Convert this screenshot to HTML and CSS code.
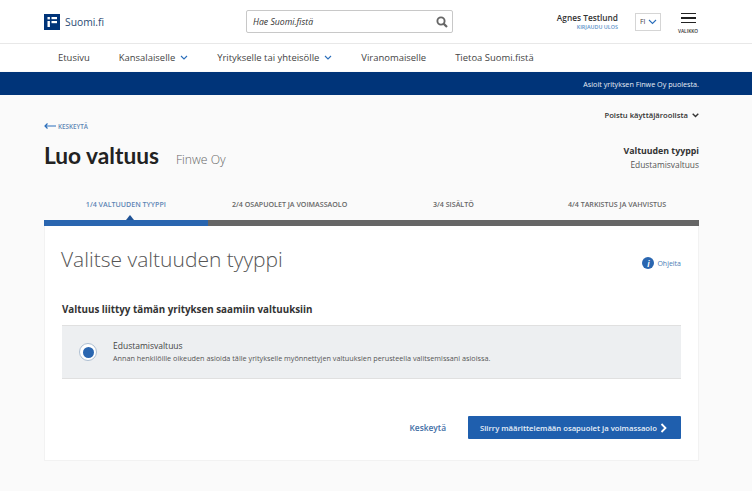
FILE: index.html
```html
<!DOCTYPE html>
<html lang="fi">
<head>
<meta charset="utf-8">
<title>Luo valtuus</title>
<link rel="stylesheet" href="styles.css">
</head>
<body>
<header class="top">
  <a class="logo">
    <svg class="logo-mark" width="16" height="16" viewBox="0 0 16 16"><rect width="16" height="16" fill="#003479"/><rect x="3.5" y="3" width="2.4" height="2.4" fill="#fff"/><rect x="3.5" y="7" width="2.4" height="6" fill="#fff"/><rect x="7.5" y="3" width="5.5" height="2.2" fill="#fff"/><rect x="7.5" y="7" width="5.5" height="2.2" fill="#fff"/></svg>
    <span class="logo-text">Suomi.fi</span>
  </a>
  <div class="search">
    <span class="search-text">Hae Suomi.fistä</span>
    <svg width="12" height="12" viewBox="0 0 12 12"><circle cx="5" cy="5" r="3.6" fill="none" stroke="#666" stroke-width="1.9"/><path d="M7.6 7.6 11 11" stroke="#666" stroke-width="2.2"/></svg>
  </div>
  <div class="user">
    <span class="user-name">Agnes Testlund</span>
    <span class="logout">KIRJAUDU ULOS</span>
  </div>
  <div class="lang">FI
    <svg width="9" height="6" viewBox="0 0 9 6"><path d="M1 1l3.5 3.5L8 1" fill="none" stroke="#2a6ebb" stroke-width="1.1"/></svg>
  </div>
  <div class="menu">
    <span class="burger"><i></i><i></i><i></i></span>
    <span class="menu-label">VALIKKO</span>
  </div>
</header>
<nav class="nav">
  <a class="nav-item">Etusivu</a>
  <a class="nav-item">Kansalaiselle <svg width="8" height="5" viewBox="0 0 8 5"><path d="M1 1l3 3 3-3" fill="none" stroke="#2a6ebb" stroke-width="1.1"/></svg></a>
  <a class="nav-item">Yritykselle tai yhteisölle <svg width="8" height="5" viewBox="0 0 8 5"><path d="M1 1l3 3 3-3" fill="none" stroke="#2a6ebb" stroke-width="1.1"/></svg></a>
  <a class="nav-item">Viranomaiselle</a>
  <a class="nav-item">Tietoa Suomi.fistä</a>
</nav>
<div class="band">Asioit yrityksen Finwe Oy puolesta.</div>
<main class="page">
  <div class="role">Poistu käyttäjäroolista
    <svg width="7" height="5" viewBox="0 0 7 5"><path d="M.7.7l2.8 2.8L6.3.7" fill="none" stroke="#333" stroke-width="1.4"/></svg>
  </div>
  <a class="back">
    <svg width="12" height="6" viewBox="0 0 12 6"><path d="M3.5.5 1 3l2.5 2.5M1 3h11" fill="none" stroke="#2a6ebb" stroke-width="1.2"/></svg>
    KESKEYTÄ
  </a>
  <div class="title-row">
    <div class="titles">
      <h1 class="title">Luo valtuus</h1>
      <span class="company">Finwe Oy</span>
    </div>
    <div class="type">
      <strong class="type-label">Valtuuden tyyppi</strong>
      <span class="type-value">Edustamisvaltuus</span>
    </div>
  </div>
  <ol class="steps">
    <li class="step active">1/4 VALTUUDEN TYYPPI</li>
    <li class="step">2/4 OSAPUOLET JA VOIMASSAOLO</li>
    <li class="step">3/4 SISÄLTÖ</li>
    <li class="step">4/4 TARKISTUS JA VAHVISTUS</li>
  </ol>
  <section class="card">
    <div class="card-head">
      <h2 class="card-title">Valitse valtuuden tyyppi</h2>
      <a class="help"><span class="help-icon">i</span>Ohjeita</a>
    </div>
    <h3 class="section-title">Valtuus liittyy tämän yrityksen saamiin valtuuksiin</h3>
    <div class="option">
      <span class="radio"><span class="radio-dot"></span></span>
      <div class="option-text">
        <div class="option-name">Edustamisvaltuus</div>
        <div class="option-desc">Annan henkilöille oikeuden asioida tälle yritykselle myönnettyjen valtuuksien perusteella valitsemissani asioissa.</div>
      </div>
    </div>
    <div class="actions">
      <a class="cancel">Keskeytä</a>
      <a class="next">Siirry määrittelemään osapuolet ja voimassaolo
        <svg width="7" height="10" viewBox="0 0 7 10"><path d="M1.5 1l4 4-4 4" fill="none" stroke="#fff" stroke-width="1.8"/></svg>
      </a>
    </div>
  </section>
</main>
</body>
</html>
```
FILE: styles.css
```css
* { box-sizing: border-box; }
html, body { margin: 0; padding: 0; }
body {
  width: 752px;
  height: 491px;
  overflow: hidden;
  background: #fafafa;
  color: #333;
  font-family: "Open Sans", "Noto Sans", sans-serif;
}
.top {
  display: flex;
  align-items: center;
  height: 44px;
  padding-left: 44px;
  background: #fff;
  border-bottom: 1px solid #e8e8e8;
}
.logo { display: flex; align-items: center; gap: 5px; width: 202px; }
.logo-mark { display: block; }
.logo-text { font-size: 10.3px; color: #2b4a74; }
.search {
  display: flex;
  align-items: center;
  justify-content: space-between;
  width: 207px;
  height: 23px;
  padding: 0 4px 0 6px;
  background: #fff;
  border: 1px solid #c8c8c8;
  border-radius: 2px;
}
.search-text { font-size: 8.7px; font-style: italic; color: #333; }
.user {
  display: flex;
  flex-direction: column;
  align-items: flex-end;
  width: 165px;
  margin-top: -1px;
}
.user-name { font-size: 8.3px; font-weight: 600; color: #333; line-height: 12px; }
.logout { font-size: 5.4px; font-weight: 600; color: #5d93c9; line-height: 7px; }
.lang {
  display: flex;
  align-items: center;
  justify-content: space-between;
  width: 26px;
  height: 18px;
  margin-left: 17px;
  padding: 0 3px 0 4px;
  font-size: 7px;
  color: #444;
  background: #fff;
  border: 1px solid #d5d5d5;
}
.menu {
  display: flex;
  flex-direction: column;
  align-items: center;
  width: 24px;
  margin-top: 5px;
  margin-left: 15px;
}
.burger { display: flex; flex-direction: column; gap: 3px; width: 15px; margin-bottom: 5px; }
.burger i { display: block; height: 1.5px; background: #222; }
.menu-label { font-size: 4.8px; font-weight: 600; color: #333; line-height: 7px; }
.nav {
  display: flex;
  align-items: center;
  gap: 29px;
  height: 27px;
  margin-bottom: 1px;
  padding-left: 58px;
  background: #fff;
  font-size: 9.45px;
  color: #444;
}
.nav-item { display: flex; align-items: center; gap: 5px; white-space: nowrap; }
.band {
  display: flex;
  align-items: center;
  justify-content: flex-end;
  height: 23px;
  padding-right: 53px;
  background: #003479;
  color: #e6edf5;
  font-size: 7.2px;
}
.page { padding: 0 53px 0 44px; }
.role {
  display: flex;
  align-items: center;
  justify-content: flex-end;
  gap: 4px;
  height: 14px;
  margin-top: 13px;
  font-size: 7.7px;
  font-weight: 600;
  color: #333;
}
.back {
  display: flex;
  align-items: center;
  gap: 2px;
  height: 8px;
  font-size: 6.3px;
  font-weight: 600;
  color: #5d85b5;
}
.title-row {
  display: flex;
  justify-content: space-between;
  align-items: flex-start;
  margin-top: 11px;
}
.titles { display: flex; align-items: baseline; gap: 17px; }
.title { margin: 0; font-size: 22.7px; line-height: 30px; font-weight: 700; color: #222; font-family: "Lato", sans-serif; }
.company { font-size: 12.2px; font-weight: 300; color: #666; }
.type { display: flex; flex-direction: column; align-items: flex-end; margin-top: 3px; }
.type-label { font-size: 8.8px; line-height: 14px; font-weight: 700; color: #333; }
.type-value { font-size: 8.4px; line-height: 14px; color: #555; }
.steps {
  display: grid;
  grid-template-columns: repeat(4, 1fr);
  margin: 27px 0 0;
  padding: 0;
  list-style: none;
}
.step {
  position: relative;
  height: 27px;
  border-bottom: 6px solid #666;
  text-align: center;
  font-size: 7.1px;
  line-height: 10px;
  font-weight: 600;
  color: #666;
  white-space: nowrap;
}
.step.active { border-bottom-color: #2a66b0; color: #5d85b5; }
.step.active::after {
  content: "";
  position: absolute;
  left: 50%;
  bottom: 0;
  border: 4px solid transparent;
  border-top-width: 0;
  border-bottom: 5px solid #1f5296;
}
.card {
  height: 235px;
  padding: 0 17px;
  background: #fff;
  border: 1px solid #f2f2f2;
  border-top: 0;
}
.card-head {
  display: flex;
  justify-content: space-between;
  align-items: center;
  height: 33px;
  padding-top: 16px;
  box-sizing: content-box;
}
.card-title { margin: 0 0 0 -1px; font-size: 21px; font-weight: 300; color: #555; white-space: nowrap; }
.help { display: flex; align-items: center; gap: 3px; margin-top: 9px; font-size: 7px; color: #4a7cb5; }
.help-icon {
  display: flex;
  align-items: center;
  justify-content: center;
  width: 12px;
  height: 12px;
  border-radius: 50%;
  background: #2a66b0;
  color: #fff;
  font-size: 8px;
  font-weight: 700;
  font-style: italic;
}
.section-title { margin: 27px 0 0; font-size: 9.8px; line-height: 16px; font-weight: 700; color: #333; }
.option {
  display: flex;
  align-items: center;
  height: 54px;
  margin-top: 7px;
  padding-left: 17px;
  background: #edeff1;
  border-top: 1px solid #e0e0e0;
  border-bottom: 1px solid #e0e0e0;
}
.radio {
  display: flex;
  align-items: center;
  justify-content: center;
  width: 18px;
  height: 18px;
  border-radius: 50%;
  background: #fff;
  border: 1px solid #aebfd2;
}
.radio-dot { width: 11px; height: 11px; border-radius: 50%; background: #2a66b0; }
.option-text { margin-left: 16px; }
.option-name { font-size: 8.5px; line-height: 13px; color: #444; }
.option-desc { font-size: 7.25px; line-height: 13px; color: #555; white-space: nowrap; }
.actions {
  display: flex;
  align-items: center;
  justify-content: flex-end;
  gap: 22px;
  margin-top: 37px;
}
.cancel { font-size: 8.4px; font-weight: 600; color: #3f6ea5; }
.next {
  display: flex;
  align-items: center;
  justify-content: space-between;
  width: 213px;
  height: 23px;
  padding: 0 14px 0 12px;
  background: #1f5fae;
  border-radius: 1px;
  color: #e8f0f8;
  font-size: 7.7px;
  font-weight: 600;
  white-space: nowrap;
}
```
